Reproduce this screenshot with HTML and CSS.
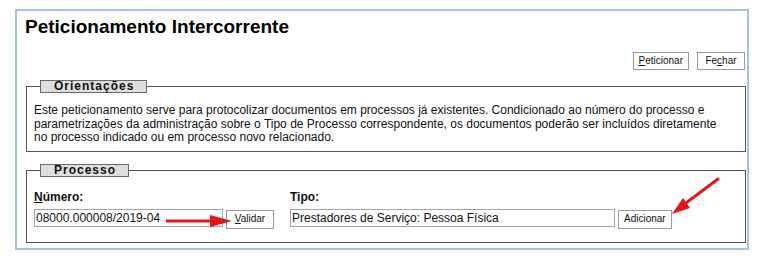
FILE: index.html
```html
<!DOCTYPE html>
<html lang="pt-BR">
<head>
<meta charset="UTF-8">
<meta name="viewport" content="width=device-width, initial-scale=1.0">
<title>Peticionamento Intercorrente</title>
<link rel="stylesheet" href="styles.css">
</head>
<body>
  <div class="janela">
    <h1 class="titulo">Peticionamento Intercorrente</h1>

    <div class="acoes">
      <button type="button" class="botao"><u>P</u>eticionar</button>
      <button type="button" class="botao">Fe<u>c</u>har</button>
    </div>

    <fieldset class="quadro">
      <legend class="legenda">Orientações</legend>
      <p class="texto">Este peticionamento serve para protocolizar documentos em processos já existentes. Condicionado ao número do processo e parametrizações da administração sobre o Tipo de Processo correspondente, os documentos poderão ser incluídos diretamente no processo indicado ou em processo novo relacionado.</p>
    </fieldset>

    <fieldset class="quadro processo">
      <legend class="legenda">Processo</legend>
      <div class="linha">
        <div class="campo">
          <label class="rotulo" for="numero"><u>N</u>úmero:</label>
          <div class="grupo">
            <input type="text" id="numero" class="entrada numero" value="08000.000008/2019-04">
            <button type="button" class="botao"><u>V</u>alidar</button>
          </div>
        </div>
        <div class="campo">
          <label class="rotulo" for="tipo">Tipo:</label>
          <div class="grupo">
            <input type="text" id="tipo" class="entrada tipo" value="Prestadores de Serviço: Pessoa Física">
            <button type="button" class="botao">Adicionar</button>
          </div>
        </div>
      </div>
    </fieldset>
  </div>

  <!-- setas de destaque sobre a tela -->
  <svg class="setas" width="758" height="259" viewBox="0 0 758 259">
    <line x1="166" y1="221" x2="214" y2="221" stroke="#e3161b" stroke-width="3"/>
    <polygon points="210,215 232,221 210,227" fill="#e3161b"/>
    <line x1="718" y1="179" x2="686" y2="203" stroke="#e3161b" stroke-width="3" stroke-linecap="round"/>
    <polygon points="690,208 672,214 683,198" fill="#e3161b"/>
  </svg>
</body>
</html>
```

FILE: styles.css
```css
/* Base */
body {
  margin: 0;
  background: #fff;
  font-family: "Liberation Sans", Arial, sans-serif;
  color: #111;
}

/* Moldura da janela */
.janela {
  box-sizing: border-box;
  width: 734px;
  height: 241px;
  margin: 9px 0 0 15px;
  padding: 5px 1px 0 8px;
  border: 2px solid #a3c1ee;
}

.titulo {
  margin: 0;
  font-size: 19px;
  font-weight: bold;
  line-height: 22px;
  color: #000;
}

.acoes {
  display: flex;
  justify-content: flex-end;
  gap: 8px;
  margin: 14px 1px 0 0;
}

/* Botoes */
.botao {
  box-sizing: border-box;
  min-width: 48px;
  height: 18px;
  padding: 0 5px;
  background: #fff;
  border: 1px solid #9a9a9a;
  border-radius: 0;
  font-family: "Liberation Sans", Arial, sans-serif;
  font-size: 10px;
  line-height: 16px;
  color: #111;
}

/* Quadros */
.quadro {
  margin: 10px 0 0 1px;
  padding: 11px 8px 6px 7px;
  border: 1px solid #555;
}

.processo {
  margin-top: 12px;
  padding: 13px 8px 13px 7px;
}

.legenda {
  margin-left: 6px;
  padding: 0 12px 0 13px;
  background: #dedede;
  border: 1px solid #6a6a6a;
  font-size: 12px;
  font-weight: bold;
  line-height: 11px;
  letter-spacing: 1px;
  color: #111;
}

.texto {
  margin: 0;
  padding-right: 6px;
  font-size: 12px;
  line-height: 13.6px;
}

/* Campos do processo */
.linha {
  display: flex;
  gap: 16px;
}

.rotulo {
  display: block;
  margin-bottom: 5px;
  font-size: 12px;
  font-weight: bold;
  line-height: 14px;
}

.grupo {
  display: flex;
  align-items: flex-start;
  gap: 3px;
}

.grupo .botao {
  height: 19px;
  margin-top: 1px;
}

.entrada {
  box-sizing: border-box;
  height: 18px;
  padding: 0 1px;
  border: 1px solid #a5a5a5;
  font-family: "Liberation Sans", Arial, sans-serif;
  font-size: 12px;
  color: #111;
}

.numero {
  width: 189px;
}

.tipo {
  width: 325px;
}

.setas {
  position: absolute;
  left: 0;
  top: 0;
  pointer-events: none;
}
```
